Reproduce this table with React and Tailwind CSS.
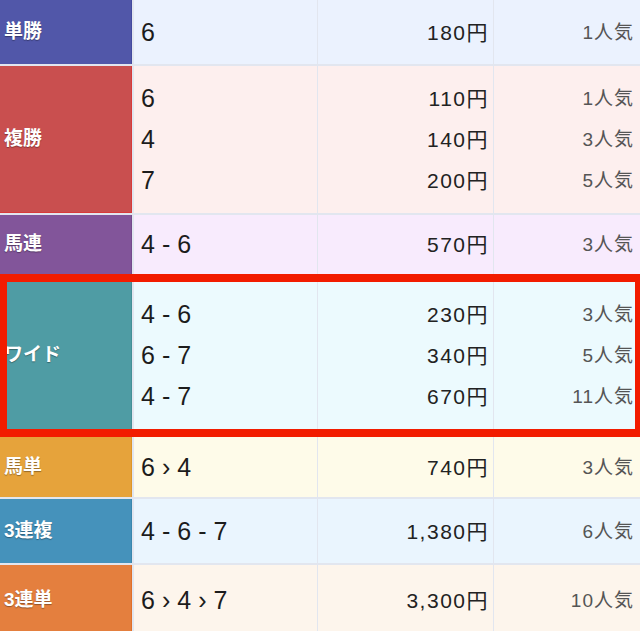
import React from "react";

const rows = [
  {
    label: "単勝",
    rowClass: "h-[64px]",
    labelClass: "bg-[#5157a9] border-r border-[#434a9e]",
    cellClass: "bg-[#ebf2fe]",
    items: [["6", "180円", "1人気"]],
  },
  {
    label: "複勝",
    rowClass: "h-[147px]",
    labelClass: "bg-[#c94f4f] border-r border-b border-[#d83a3a]",
    cellClass: "bg-[#fdefee]",
    items: [
      ["6", "110円", "1人気"],
      ["4", "140円", "3人気"],
      ["7", "200円", "5人気"],
    ],
  },
  {
    label: "馬連",
    rowClass: "h-[59px]",
    labelClass: "bg-[#82559a] border-r border-[#744a8c]",
    cellClass: "bg-[#f8ebfd]",
    items: [["4-6", "570円", "3人気"]],
  },
  {
    label: "ワイド",
    rowClass: "h-[159px]",
    labelClass: "bg-[#4f9ca4] border-r border-[#448f97]",
    cellClass: "bg-[#ecfafe]",
    items: [
      ["4-6", "230円", "3人気"],
      ["6-7", "340円", "5人気"],
      ["4-7", "670円", "11人気"],
    ],
  },
  {
    label: "馬単",
    rowClass: "h-[60px]",
    labelClass: "bg-[#e6a33b] border-r border-[#de9628]",
    cellClass: "bg-[#fefbe9]",
    items: [["6›4", "740円", "3人気"]],
  },
  {
    label: "3連複",
    rowClass: "h-[64px]",
    labelClass: "bg-[#4592bb] border-r border-[#3a86ae]",
    cellClass: "bg-[#eaf5fe]",
    items: [["4-6-7", "1,380円", "6人気"]],
  },
  {
    label: "3連単",
    rowClass: "h-[70px]",
    labelClass: "bg-[#e47f3e] border-r border-[#e0702a]",
    cellClass: "bg-[#fdf5ec]",
    items: [["6›4›7", "3,300円", "10人気"]],
  },
];

function Row({ row }) {
  return (
    <div className={`flex shrink-0 gap-x-[1px] ${row.rowClass}`}>
      <div
        className={`w-[132px] mr-[1px] flex items-center pl-[4px] text-white font-bold text-[19px] [text-shadow:0_1px_1px_rgba(0,0,0,0.35)] ${row.labelClass}`}
      >
        {row.label}
      </div>
      <div className={`w-[183px] flex flex-col justify-center pl-[7px] ${row.cellClass}`}>
        {row.items.map((it, i) => (
          <div key={i} className="leading-[41px] text-[25px] tracking-[7px] text-[#1c1c1c]">
            {it[0]}
          </div>
        ))}
      </div>
      <div className={`w-[175px] flex flex-col justify-center items-end pr-[4px] ${row.cellClass}`}>
        {row.items.map((it, i) => (
          <div key={i} className="leading-[41px] text-[21px] tracking-[1.5px] text-[#222]">
            {it[1]}
          </div>
        ))}
      </div>
      <div className={`flex-1 flex flex-col justify-center items-end pr-[6px] ${row.cellClass}`}>
        {row.items.map((it, i) => (
          <div key={i} className="leading-[41px] text-[19px] tracking-[1px] text-[#555]">
            {it[2]}
          </div>
        ))}
      </div>
    </div>
  );
}

export default function App() {
  return (
    <div className="relative w-[640px] h-[631px] overflow-hidden bg-[#e2e6ef] flex flex-col gap-y-[2px] font-['Liberation_Sans','Noto_Sans_CJK_JP',sans-serif]">
      {rows.map((row) => (
        <Row key={row.label} row={row} />
      ))}
      {/* highlight frame around ワイド */}
      <div className="absolute left-0 top-[274px] w-[640px] h-[163px] border-[#f21c00] border-t-8 border-b-8 border-l-[7px] border-r-[5px]"></div>
    </div>
  );
}
